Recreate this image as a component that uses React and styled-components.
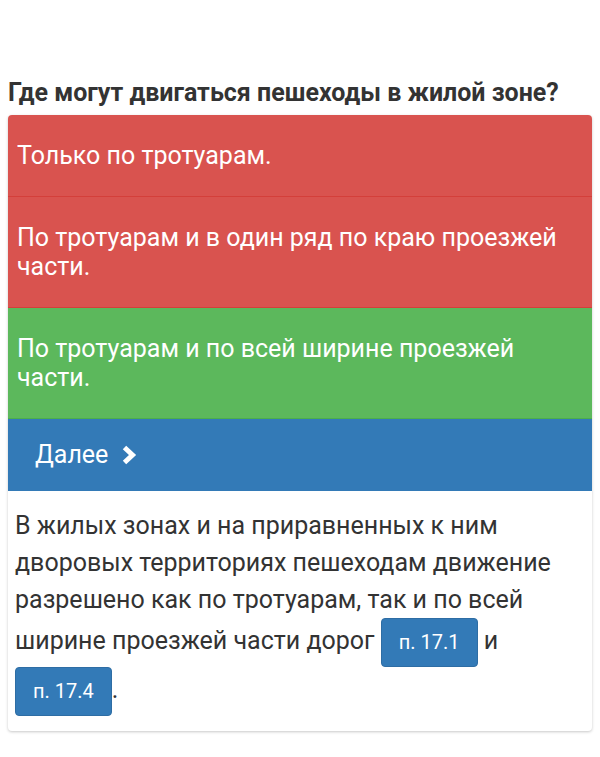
import React from 'react';
import styled, { createGlobalStyle } from 'styled-components';

const GlobalStyle = createGlobalStyle`
  body {
    margin: 0;
    background: #fff;
    font-family: Roboto, "Noto Sans", "Liberation Sans", sans-serif;
    color: #333;
  }
`;

const Page = styled.div`
  padding: 79px 8px 24px;
`;

const Question = styled.h2`
  margin: 0 0 8px;
  font-size: 25px;
  line-height: 28px;
  font-weight: 700;
  color: #333;
`;

const Card = styled.div`
  background: #fff;
  border-radius: 4px;
  overflow: hidden;
  box-shadow: 0 1px 3px rgba(0, 0, 0, 0.22);
`;

const tones = {
  wrong: { bg: '#d9534f', line: '#d43f3a' },
  right: { bg: '#5cb85c', line: '#4cae4c' },
};

const Answer = styled.div`
  padding: 26px 9px;
  font-size: 25px;
  line-height: 29px;
  color: #fff;
  background: ${p => tones[p.$tone].bg};
  border-bottom: 1px solid ${p => tones[p.$tone].line};
`;

const NextButton = styled.div`
  display: flex;
  align-items: center;
  gap: 13px;
  padding: 21px 27px 22px;
  font-size: 25px;
  line-height: 29px;
  color: #fff;
  background: #337ab7;
`;

const Explanation = styled.p`
  margin: 0;
  padding: 16px 7px 15px;
  font-size: 25px;
  line-height: 37px;
  color: #333;
`;

const RuleLink = styled.span`
  display: inline-block;
  padding: 11px 17px;
  font-size: 20px;
  line-height: 25px;
  color: #fff;
  background: #337ab7;
  border: 1px solid #2e6da4;
  border-radius: 4px;
`;

const Chevron = () => (
  <svg width="16" height="20" viewBox="0 0 16 20">
    <path d="M3.5 2.5 L11.5 10 L3.5 17.5" fill="none" stroke="#fff" strokeWidth="5" strokeLinejoin="miter" />
  </svg>
);

const answers = [
  { text: 'Только по тротуарам.', tone: 'wrong' },
  { text: 'По тротуарам и в один ряд по краю проезжей части.', tone: 'wrong' },
  { text: 'По тротуарам и по всей ширине проезжей части.', tone: 'right' },
];

export default function App() {
  return (
    <Page>
      <GlobalStyle />
      <Question>Где могут двигаться пешеходы в жилой зоне?</Question>
      <Card>
        {answers.map((a, i) => (
          <Answer key={i} $tone={a.tone}>{a.text}</Answer>
        ))}
        <NextButton>
          Далее <Chevron />
        </NextButton>
        <Explanation>
          В жилых зонах и на приравненных к ним дворовых территориях пешеходам движение
          разрешено как по тротуарам, так и по всей ширине проезжей части дорог{' '}
          <RuleLink>п. 17.1</RuleLink> и <RuleLink>п. 17.4</RuleLink>.
        </Explanation>
      </Card>
    </Page>
  );
}
